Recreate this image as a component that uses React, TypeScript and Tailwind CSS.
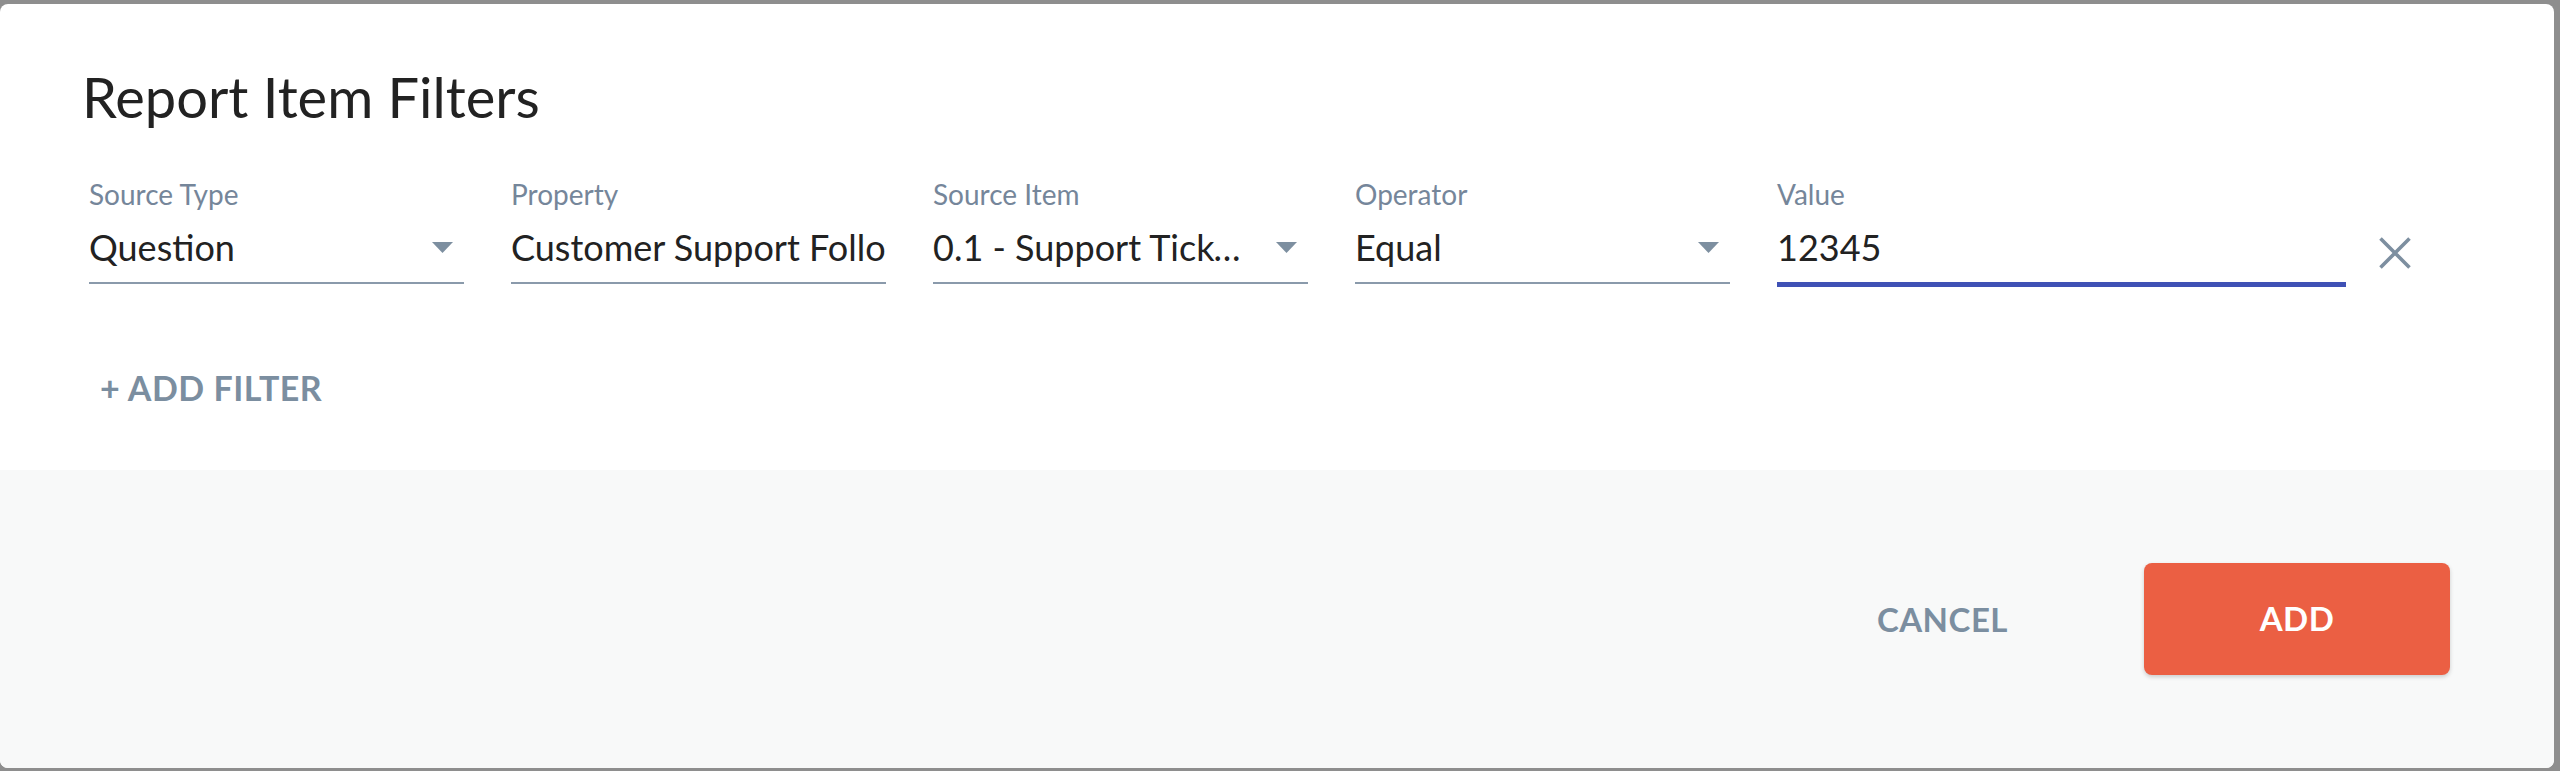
const font = { fontFamily: "Lato, 'Open Sans', sans-serif" }

function Arrow() {
  return (
    <svg width="21" height="11" viewBox="0 0 21 11" className="shrink-0 ml-[20px] mr-[11px]">
      <path d="M0 0 L21 0 L10.5 11 Z" fill="#7d8fa0" />
    </svg>
  )
}

function SelectField({ label, value }: { label: string; value: string }) {
  return (
    <div className="w-[375px] shrink-0 flex flex-col">
      <span className="text-[28px] leading-[34px] text-[#75869a]">{label}</span>
      <div className="mt-[14px] flex items-center pb-[13px] border-b-2 border-[#8a9aab]">
        <span className="flex-1 min-w-0 truncate text-[36px] leading-[44px] text-[#222222]">{value}</span>
        <Arrow />
      </div>
    </div>
  )
}

export default function App() {
  return (
    <div className="w-full h-[771px] bg-[#8e8e8e] pt-[4px] pr-[6px] pb-[3px] flex" style={font}>
      <div className="flex-1 flex flex-col bg-white rounded-[8px] overflow-hidden">
        {/* filters */}
        <div className="h-[466px] pt-[59px]">
          <h1 className="pl-[82px] text-[56px] leading-[68px] font-normal text-[#222222]">
            Report Item Filters
          </h1>

          <div className="mt-[46px] pl-[89px] flex items-start gap-[47px]">
            <SelectField label="Source Type" value="Question" />

            <div className="w-[375px] shrink-0 flex flex-col">
              <span className="text-[28px] leading-[34px] text-[#75869a]">Property</span>
              <div className="mt-[14px] pb-[13px] border-b-2 border-[#8a9aab] overflow-hidden">
                <span className="block whitespace-nowrap text-[36px] leading-[44px] text-[#222222]">
                  Customer Support Follow-up Survey
                </span>
              </div>
            </div>

            <SelectField label="Source Item" value="0.1 - Support Ticket Follow-up" />
            <SelectField label="Operator" value="Equal" />

            <div className="w-[569px] shrink-0 flex flex-col">
              <span className="text-[28px] leading-[34px] text-[#75869a]">Value</span>
              <div className="mt-[14px] pb-[13px] border-b-[5px] border-[#3f51b5]">
                <span className="block text-[36px] leading-[44px] text-[#222222]">12345</span>
              </div>
            </div>

            <button className="-ml-[22px] mt-[52px] w-[48px] h-[48px] flex items-center justify-center">
              <svg width="32" height="32" viewBox="0 0 32 32">
                <path d="M1.5 1.5 L30.5 30.5 M30.5 1.5 L1.5 30.5" stroke="#7d8fa0" strokeWidth="3.6" strokeLinecap="butt" fill="none" />
              </svg>
            </button>
          </div>

          <button className="mt-[81px] ml-[100px] text-[34px] leading-[40px] font-bold tracking-[0.5px] text-[#7b8ea0]">
            + ADD FILTER
          </button>
        </div>

        {/* actions */}
        <div className="flex-1 bg-[#f8f9f9] flex items-center justify-end pr-[104px] gap-[136px]">
          <button className="text-[33px] leading-[40px] font-bold tracking-[0.5px] text-[#7b8ea0]">CANCEL</button>
          <button className="w-[306px] h-[112px] rounded-[8px] bg-[#eb5f43] shadow-[0_2px_4px_rgba(0,0,0,0.18)] text-[33px] font-bold tracking-[0.5px] text-white">
            ADD
          </button>
        </div>
      </div>
    </div>
  )
}
